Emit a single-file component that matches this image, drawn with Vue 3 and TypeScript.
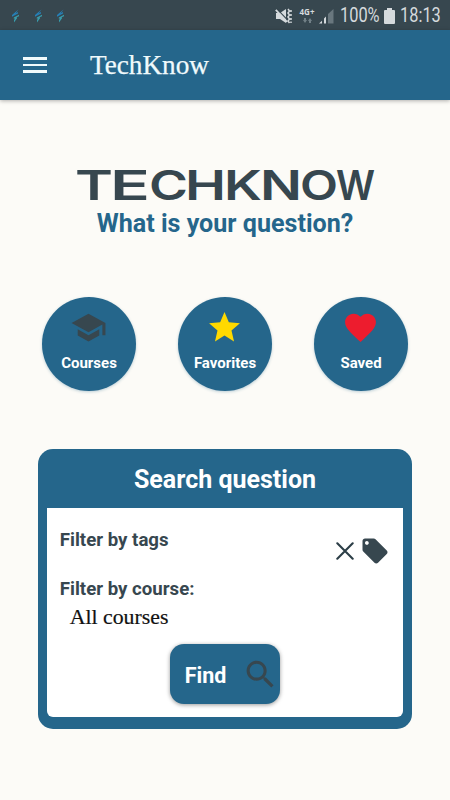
<script setup lang="ts">
interface Shortcut {
  label: string
  color: string
  path: string
}

interface Letter {
  char: string
  x: number
  width: number
}

const letters: Letter[] = [
  { char: 'T', x: -1, width: 38 },
  { char: 'E', x: 34, width: 40 },
  { char: 'C', x: 73, width: 39 },
  { char: 'H', x: 109, width: 41 },
  { char: 'K', x: 148, width: 38 },
  { char: 'N', x: 184, width: 42 },
  { char: 'O', x: 224, width: 38 },
  { char: 'W', x: 260, width: 39 },
]

const shortcuts: Shortcut[] = [
  { label: 'Courses', color: '#37474f', path: 'M5 13.18v4L12 21l7-3.82v-4L12 17l-7-3.82zM12 3L1 9l11 6 9-4.91V17h2V9L12 3z' },
  { label: 'Favorites', color: '#ffd900', path: 'M12 17.27L18.18 21l-1.64-7.03L22 9.24l-7.19-.61L12 2 9.19 8.63 2 9.24l5.46 4.73L5.82 21z' },
  { label: 'Saved', color: '#ed1c2e', path: 'M12 21.35l-1.45-1.32C5.4 15.36 2 12.28 2 8.5 2 5.42 4.42 3 7.5 3c1.74 0 3.41.81 4.5 2.09C13.09 3.81 14.76 3 16.5 3 19.58 3 22 5.42 22 8.5c0 3.78-3.4 6.86-8.55 11.54L12 21.35z' },
]
</script>

<template>
  <div class="screen">
    <div class="status">
      <div class="notifications">
        <svg v-for="n in 3" :key="n" width="9" height="14" viewBox="0 0 9 14">
          <path d="M7.5.5 1 6v1.8l6-3.4V3L4.5 4.6z" fill="#2580b8" />
          <path d="M8 5.8 2.8 8.4v1.4l1.4-.4L3 11v2.5l3.2-4.4-.6-.8L8 7.2z" fill="#399cac" />
        </svg>
      </div>
      <div class="indicators">
        <svg class="mute" width="18" height="16" viewBox="0 0 18 16">
          <path d="M1 5h4l6-4v14l-6-4H1z" fill="#d5dadd" />
          <path d="M1.8.8 13 12.5" stroke="#37474f" stroke-width="1.2" />
          <path d="M.8 1.8 12 13.8" stroke="#d5dadd" stroke-width="1.8" />
          <path d="m13 1 1.5 2L13 5l1.5 2L13 9l1.5 2-1.5 2 1.5 2M16 2v2M16 6v2M16 10v2M16 13.5v1.5" fill="none" stroke="#d5dadd" stroke-width="1.5" />
        </svg>
        <div class="network">
          <span>4G+</span>
          <svg width="9" height="5" viewBox="0 0 9 5" fill="#718087">
            <path d="M1 0h2v2h1L2 5 0 2h1zM6 5V3H5l2-3 2 3H8v2z" />
          </svg>
        </div>
        <svg class="signal" width="15" height="16" viewBox="0 0 15 16">
          <path d="M0 15.5 3 12.8v2.7zM5 10.5l2-2v7H5z" fill="#d5dadd" />
          <path d="M9 6 14.5 1v14.5H9z" fill="#69777e" />
        </svg>
        <span class="percent"><b>100%</b></span>
        <svg class="battery" width="11" height="16" viewBox="0 0 11 16">
          <path d="M3 0h5v2h2q1 0 1 1v12q0 1-1 1H1q-1 0-1-1V3q0-1 1-1h2z" fill="#d5dadd" />
        </svg>
        <span class="clock"><b>18:13</b></span>
      </div>
    </div>

    <header class="appbar">
      <button class="menu" aria-label="Menu"><i></i><i></i><i></i></button>
      <span class="title">TechKnow</span>
    </header>

    <main>
      <svg class="wordmark" width="299" height="30" viewBox="0 0 299 30">
        <text y="30"><tspan v-for="letter in letters" :key="letter.char" :x="letter.x" :textLength="letter.width" lengthAdjust="spacingAndGlyphs">{{ letter.char }}</tspan></text>
      </svg>
      <h1>What is your question?</h1>

      <nav class="shortcuts">
        <button v-for="item in shortcuts" :key="item.label" class="shortcut">
          <svg width="37" height="37" viewBox="0 0 24 24"><path :d="item.path" :fill="item.color" /></svg>
          <span>{{ item.label }}</span>
        </button>
      </nav>

      <section class="search">
        <h2>Search question</h2>
        <div class="panel">
          <div class="tags">
            <span class="label">Filter by tags</span>
            <div class="actions">
              <svg width="18" height="18" viewBox="0 0 18 18"><path d="m1.3 1.3 15.4 15.4m0-15.4L1.3 16.7" stroke="#2c3e47" stroke-width="2.1" stroke-linecap="round" /></svg>
              <svg width="30" height="30" viewBox="0 0 24 24"><path fill="#37474f" d="M21.41 11.58l-9-9C12.05 2.22 11.55 2 11 2H4c-1.1 0-2 .9-2 2v7c0 .55.22 1.05.59 1.42l9 9c.36.36.86.58 1.41.58.55 0 1.05-.22 1.41-.59l7-7c.37-.36.59-.86.59-1.41 0-.55-.23-1.06-.59-1.42zM5.5 7C4.67 7 4 6.33 4 5.5S4.67 4 5.5 4 7 4.67 7 5.5 6.33 7 5.5 7z" /></svg>
            </div>
          </div>
          <span class="label course">Filter by course:</span>
          <span class="value">All courses</span>
          <button class="find">
            <span>Find</span>
            <svg width="37" height="37" viewBox="0 0 24 24"><path fill="#37474f" d="M15.5 14h-.79l-.28-.27C15.41 12.59 16 11.11 16 9.5 16 5.91 13.09 3 9.5 3S3 5.91 3 9.5 5.91 16 9.5 16c1.61 0 3.09-.59 4.23-1.57l.27.28v.79l5 4.99L20.49 19l-4.99-5zm-6 0C7.01 14 5 11.99 5 9.5S7.01 5 9.5 5 14 7.01 14 9.5 11.99 14 9.5 14z" /></svg>
          </button>
        </div>
      </section>
    </main>
  </div>
</template>

<style>
body { margin: 0; }
</style>

<style scoped>
* { box-sizing: border-box; }
.screen { width: 450px; height: 800px; overflow: hidden; background: #fcfbf7; font-family: Roboto, sans-serif; }
button { border: 0; padding: 0; font-family: inherit; }
svg { display: block; flex: none; }
.status { height: 30px; padding: 1px 9px 0 11px; background: #37474f; display: flex; align-items: center; justify-content: space-between; }
.notifications { display: flex; gap: 13.5px; }
.indicators { display: flex; align-items: center; color: #d5dadd; font-size: 19.5px; line-height: 30px; white-space: nowrap; }
.network { width: 16px; margin: 0 4px 0 6px; display: flex; flex-direction: column; align-items: center; gap: 2px; font: 700 8px/8px "Open Sans", sans-serif; }
.percent { width: 39px; margin: 1px 5px 0 6px; }
.clock { width: 41px; margin: 1px 0 0 5px; }
.percent b, .clock b { display: inline-block; font-weight: 400; transform: scaleX(.84); transform-origin: left; }
.appbar { height: 70px; padding: 0 23px; display: flex; align-items: center; background: #25668b; box-shadow: 0 1px 4px rgba(0, 0, 0, .3); }
.menu { width: 24px; display: flex; flex-direction: column; gap: 4px; background: none; }
.menu i { height: 2.5px; background: #f0fafc; }
.title { margin-left: 43px; color: #f0fafc; font: 27.2px/36px "Liberation Serif", serif; -webkit-text-stroke: .25px #f0fafc; }
main { padding: 70px 38px 0; display: flex; flex-direction: column; align-items: center; }
.wordmark { overflow: visible; }
.wordmark text { font: 600 41.2px Inter, sans-serif; fill: #37474f; }
h1 { margin: 8px 0 0; color: #25668b; font-size: 25.1px; line-height: 32px; font-weight: 700; white-space: nowrap; }
.shortcuts { width: 366px; margin-top: 56.5px; display: flex; justify-content: space-between; }
.shortcut { width: 94px; height: 94px; padding-top: 12px; border-radius: 50%; background: #25668b; color: #fff; display: flex; flex-direction: column; align-items: center; box-shadow: 0 1px 3px rgba(37, 102, 139, .3); }
.shortcut svg { margin-right: 1px; }
.shortcut span { margin-top: 7px; font-size: 15px; line-height: 20px; font-weight: 700; }
.search { width: 374.5px; height: 280px; margin-top: 58.5px; padding: 0 9.5px 12px; border-radius: 15px; background: #25668b; display: flex; flex-direction: column; }
h2 { margin: 0; height: 58.5px; padding-top: 2px; color: #fff; font-size: 25px; line-height: 58px; font-weight: 700; text-align: center; }
.panel { flex: 1; padding: 20px 13px 0 12.5px; border-radius: 0 0 6px 6px; background: #fff; display: flex; flex-direction: column; align-items: flex-start; }
.tags { width: 100%; height: 49px; display: flex; justify-content: space-between; }
.label { color: #37474f; font-size: 18.65px; line-height: 24px; font-weight: 700; white-space: nowrap; }
.actions { height: 30px; margin-top: 8px; display: flex; align-items: center; gap: 6px; }
.value { margin: 2px 0 0 10px; color: #111; font: 21.8px/28px "Liberation Serif", serif; -webkit-text-stroke: .2px #111; }
.find { align-self: center; width: 110px; height: 60px; margin-top: 13.5px; padding: 0 1px 0 15px; border-radius: 14px; background: #25668b; color: #fff; display: flex; align-items: center; justify-content: space-between; font-size: 21.5px; font-weight: 700; box-shadow: 0 1px 4px rgba(0, 0, 0, .4); }
.find span { padding-top: 2px; }
</style>
